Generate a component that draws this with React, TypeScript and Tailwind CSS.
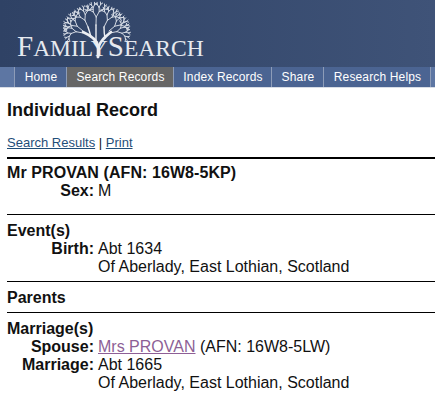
const sans = "font-['Liberation_Sans',Arial,sans-serif]";

const navItems = [
  { label: "Home", width: "w-[52px]" },
  { label: "Search Records", width: "w-[107px]", active: true },
  { label: "Index Records", width: "w-[98px]" },
  { label: "Share", width: "w-[52px]" },
  { label: "Research Helps", width: "w-[107px]" },
];

// builds the tree crown out of forked twigs
const twigs = (x: number, y: number, angle: number, len: number, depth: number): string => {
  const x2 = x + Math.cos(angle) * len;
  const y2 = y + Math.sin(angle) * len;
  const self = `M${x.toFixed(1)} ${y.toFixed(1)}L${x2.toFixed(1)} ${y2.toFixed(1)}`;
  if (depth === 0) return self;
  return (
    self +
    twigs(x2, y2, angle - 0.55, len * 0.72, depth - 1) +
    twigs(x2, y2, angle + 0.5, len * 0.76, depth - 1)
  );
};

const crown = [
  twigs(20, 32, -2.95, 7, 4),
  twigs(20, 30, -2.45, 7.5, 4),
  twigs(25, 26, -2.0, 7.5, 4),
  twigs(33, 24, -1.55, 8, 4),
  twigs(41, 26, -1.1, 7.5, 4),
  twigs(46, 30, -0.7, 7.5, 4),
  twigs(47, 32, -0.2, 7, 4),
].join("");

const TreeLogo = () => (
  <svg width="70" height="58" viewBox="0 0 70 58" className="block">
    <path d={crown} stroke="#d3d9e3" strokeWidth="1" fill="none" strokeLinecap="round" />
    <g stroke="#eceef2" fill="none" strokeLinecap="round">
      <path d="M35 56L35 45C34 39 29 35 20 31" strokeWidth="2.6" />
      <path d="M35 56L36 45C38 39 42 36 48 31" strokeWidth="2.6" />
      <path d="M28 36C27 32 26 29 25 26M42 37C41 32 41 29 41 26M33 41C33 35 33 30 33 24" strokeWidth="1.4" />
    </g>
  </svg>
);

const Label = ({ children }: { children: React.ReactNode }) => (
  <span className="w-[87px] shrink-0 text-right font-bold">{children}</span>
);

export default function App() {
  return (
    <div className={`${sans} h-[406px] w-[435px] overflow-hidden bg-white text-[16px] leading-[18px] text-[#111]`}>
      <header className="h-[67px] bg-gradient-to-r from-[#2f4265] to-[#3f5378] pl-[17px]">
        <div className="relative h-[67px]">
          <div className="absolute left-0 top-[31px] font-['Liberation_Serif',serif] text-[#e6e9ef] whitespace-nowrap">
            <span className="text-[29px] leading-[30px]">F</span>
            <span className="text-[23.5px] leading-[30px]">AMILY</span>
            <span className="text-[29px] leading-[30px]">S</span>
            <span className="text-[23.5px] leading-[30px]">EARCH</span>
          </div>
          <div className="absolute left-[46px] top-[1px]">
            <TreeLogo />
          </div>
        </div>
      </header>

      <nav className="flex h-[21px] border-b border-[#d8dde6] bg-[#5d76a3] text-[12px] leading-[20px] tracking-[0.15px] text-white">
        <div className="w-[15px] shrink-0 border-r border-[#8d9cb8]" />
        {navItems.map((item) => (
          <a
            key={item.label}
            className={`${item.width} ${item.active ? "bg-[#666666]" : "bg-[#4b6492]"} shrink-0 border-r border-[#8d9cb8] pl-[1px] text-center`}
          >
            {item.label}
          </a>
        ))}
      </nav>

      <main className="pl-[7px]">
        <h1 className="mt-[12px] text-[18px] leading-[20px] font-bold">Individual Record</h1>

        <div className="mt-[15px] text-[13px] leading-[16px]">
          <a className="text-[#1f4e79] underline">Search Results</a> |{" "}
          <a className="text-[#1f4e79] underline">Print</a>
        </div>

        <section className="mt-[6px] h-[57px] border-t-2 border-black pt-[5px]">
          <div className="font-bold tracking-[0.08px]">Mr PROVAN (AFN: 16W8-5KP)</div>
          <div className="flex">
            <Label>Sex:</Label>
            <span className="pl-[4px]">M</span>
          </div>
        </section>

        <section className="h-[67px] border-t border-black pt-[7px]">
          <div className="font-bold">Event(s)</div>
          <div className="flex">
            <Label>Birth:</Label>
            <div className="pl-[4px]">
              <div>Abt 1634</div>
              <div>Of Aberlady, East Lothian, Scotland</div>
            </div>
          </div>
        </section>

        <section className="h-[31px] border-t border-black pt-[7px] font-bold">Parents</section>

        <section className="border-t border-black pt-[7px]">
          <div className="font-bold">Marriage(s)</div>
          <div className="flex">
            <Label>Spouse:</Label>
            <div className="pl-[4px]">
              <a className="text-[#8d5f96] underline">Mrs PROVAN</a> (AFN: 16W8-5LW)
            </div>
          </div>
          <div className="flex">
            <Label>Marriage:</Label>
            <div className="pl-[4px]">
              <div>Abt 1665</div>
              <div>Of Aberlady, East Lothian, Scotland</div>
            </div>
          </div>
        </section>
      </main>
    </div>
  );
}
